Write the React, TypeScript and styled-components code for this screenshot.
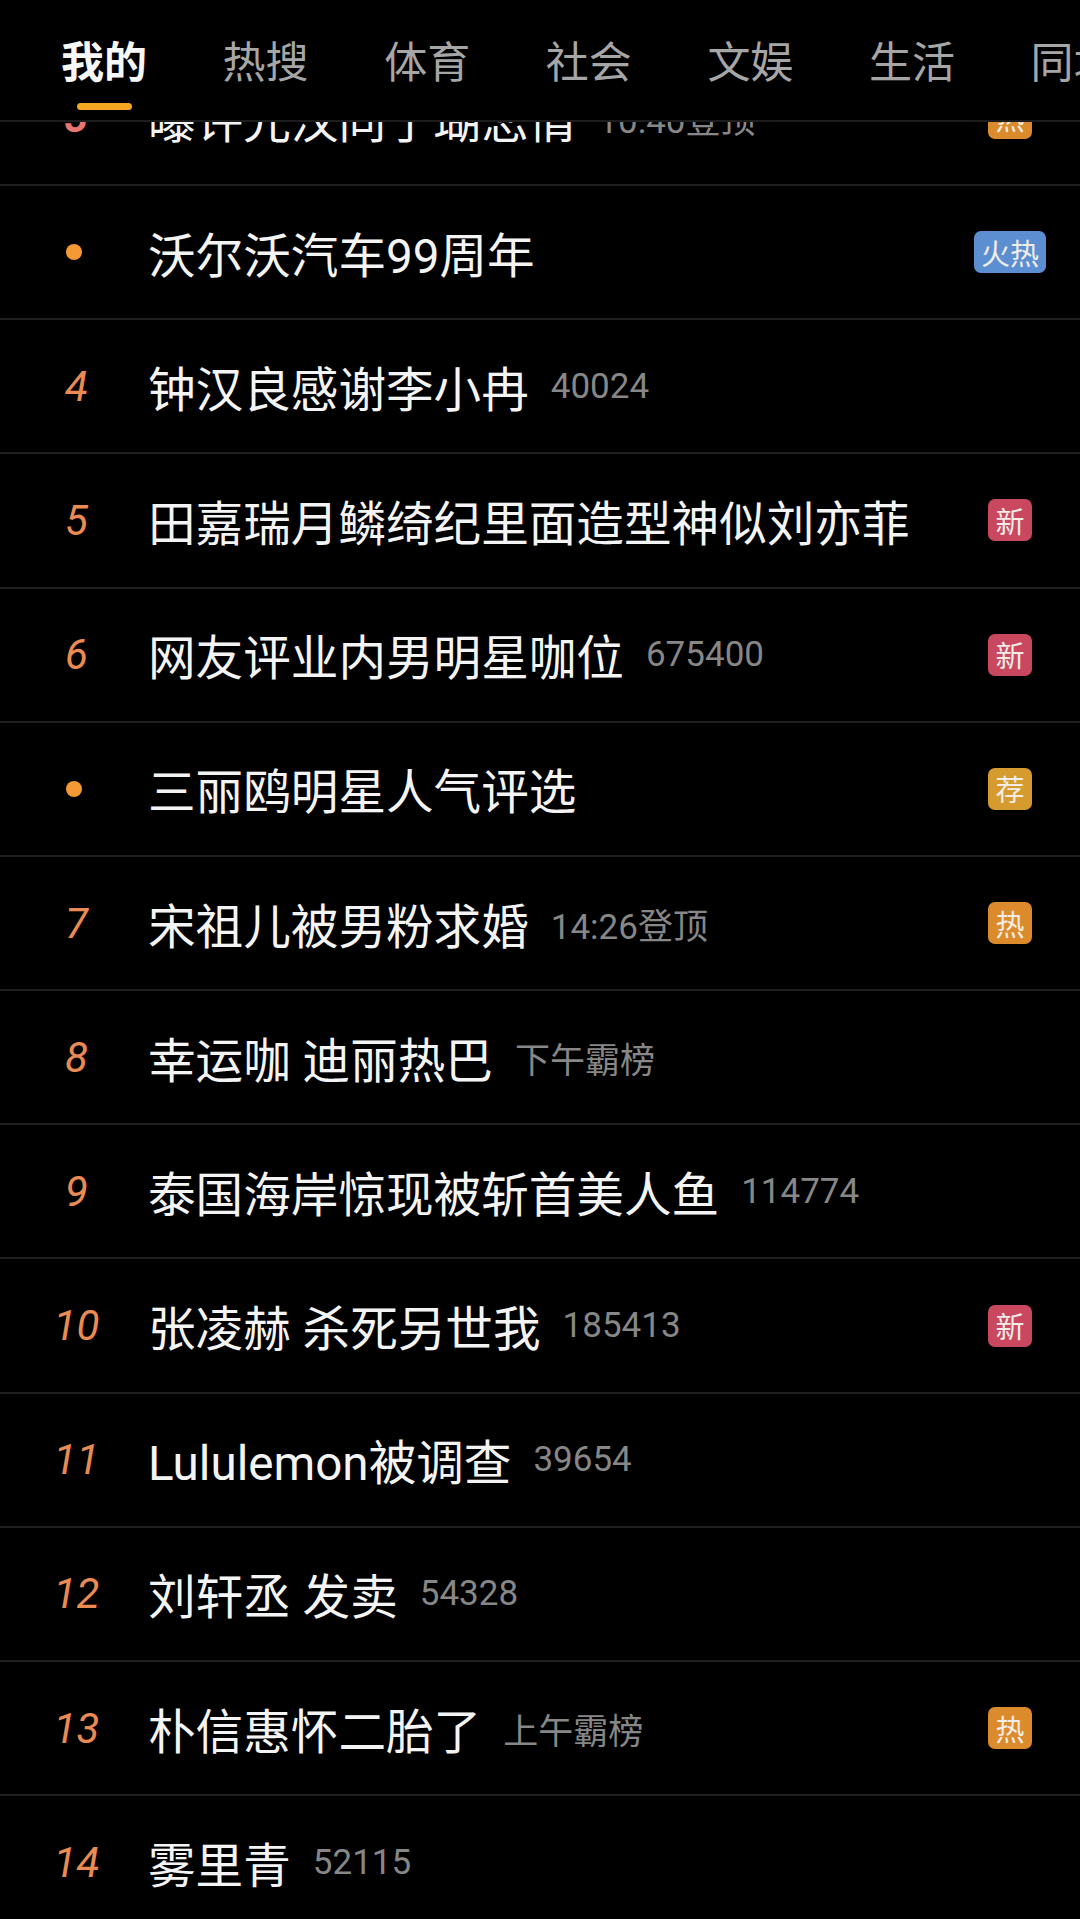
import React from "react";
import styled, { createGlobalStyle } from "styled-components";

const GlobalStyle = createGlobalStyle`
  html, body { margin: 0; padding: 0; background: #000; }
  body { font-family: Roboto, "Noto Sans CJK SC", "Noto Sans", sans-serif; }
  * { box-sizing: border-box; }
`;

const Screen = styled.div`
  position: relative;
  width: 1080px;
  height: 1919px;
  overflow: hidden;
  background: #000;
`;

const Header = styled.nav`
  position: absolute;
  top: 0;
  left: 0;
  right: 0;
  z-index: 2;
  height: 122px;
  padding: 34px 0 0 61px;
  display: flex;
  gap: 75.6px;
  background: #000;
  border-bottom: 2px solid #1d1d1d;
  overflow: hidden;
  white-space: nowrap;
`;

const Tab = styled.div`
  flex-shrink: 0;
  display: flex;
  flex-direction: column;
  align-items: center;
`;

const TabLabel = styled.span<{ $active?: boolean }>`
  font-family: "Noto Sans CJK SC", sans-serif;
  font-size: 43px;
  line-height: 50px;
  font-weight: ${(p) => (p.$active ? 700 : 400)};
  color: ${(p) => (p.$active ? "#f7f7f7" : "#a6a6a6")};
`;

const Indicator = styled.span`
  margin-top: 19px;
  width: 55px;
  height: 7px;
  border-radius: 4px;
  background: #f5a623;
`;

const List = styled.div`
  padding-top: 51.8px;
`;

const Row = styled.div`
  height: 134.2px;
  display: flex;
  align-items: center;
  border-bottom: 2px solid #1f1f1f;
`;

const RankCell = styled.div`
  width: 148px;
  flex-shrink: 0;
  display: flex;
  justify-content: center;
  align-items: center;
`;

const RankNum = styled.span<{ $color: string; $bold?: boolean }>`
  font-family: Roboto, "Liberation Sans", sans-serif;
  font-style: italic;
  font-size: 42px;
  font-weight: ${(p) => (p.$bold ? 700 : 400)};
  color: ${(p) => p.$color};
  padding-left: 5px;
`;

const Dot = styled.span`
  width: 16px;
  height: 16px;
  border-radius: 50%;
  background: #f39a34;
`;

const Main = styled.div`
  flex: 1;
  min-width: 0;
  display: flex;
  align-items: center;
  gap: 22px;
  white-space: nowrap;
`;

const Title = styled.span`
  font-family: Roboto, "Noto Sans CJK SC", sans-serif;
  font-size: 47.6px;
  color: #f4f4f4;
`;

const Sub = styled.span`
  font-family: Roboto, "Noto Sans CJK SC", sans-serif;
  font-size: 35px;
  color: #878787;
`;

const BadgeCell = styled.div`
  width: 100px;
  flex-shrink: 0;
  margin-right: 20px;
  display: flex;
  justify-content: center;
`;

const Badge = styled.span<{ $bg: string }>`
  height: 42px;
  min-width: 42px;
  padding: 0 7px;
  border-radius: 7px;
  display: inline-flex;
  align-items: center;
  justify-content: center;
  background: ${(p) => p.$bg};
  color: #f1ece6;
  font-family: "Noto Sans CJK SC", sans-serif;
  font-size: 29px;
  line-height: 1;
`;

type BadgeKind = "hot" | "fire" | "new" | "rec";

const badgeStyle: Record<BadgeKind, { text: string; bg: string }> = {
  hot: { text: "热", bg: "#dc8b2c" },
  fire: { text: "火热", bg: "#5b8fd2" },
  new: { text: "新", bg: "#c9485f" },
  rec: { text: "荐", bg: "#d69b2e" },
};

type Item = {
  rank?: number;
  title: string;
  sub?: string;
  badge?: BadgeKind;
};

const items: Item[] = [
  { rank: 3, title: "曝许光汉同了瑚恋情", sub: "10:40登顶", badge: "hot" },
  { title: "沃尔沃汽车99周年", badge: "fire" },
  { rank: 4, title: "钟汉良感谢李小冉", sub: "40024" },
  { rank: 5, title: "田嘉瑞月鳞绮纪里面造型神似刘亦菲", badge: "new" },
  { rank: 6, title: "网友评业内男明星咖位", sub: "675400", badge: "new" },
  { title: "三丽鸥明星人气评选", badge: "rec" },
  { rank: 7, title: "宋祖儿被男粉求婚", sub: "14:26登顶", badge: "hot" },
  { rank: 8, title: "幸运咖 迪丽热巴", sub: "下午霸榜" },
  { rank: 9, title: "泰国海岸惊现被斩首美人鱼", sub: "114774" },
  { rank: 10, title: "张凌赫 杀死另世我", sub: "185413", badge: "new" },
  { rank: 11, title: "Lululemon被调查", sub: "39654" },
  { rank: 12, title: "刘轩丞 发卖", sub: "54328" },
  { rank: 13, title: "朴信惠怀二胎了", sub: "上午霸榜", badge: "hot" },
  { rank: 14, title: "雾里青", sub: "52115" },
];

const tabs = ["我的", "热搜", "体育", "社会", "文娱", "生活", "同城"];

function rankColor(rank: number) {
  if (rank === 1) return "#e6434b";
  if (rank === 2) return "#ec6a55";
  if (rank === 3) return "#e8766f";
  return "#e98b52";
}

export default function App() {
  return (
    <>
      <GlobalStyle />
      <Screen>
        <Header>
          {tabs.map((t, i) => (
            <Tab key={t}>
              <TabLabel $active={i === 0}>{t}</TabLabel>
              {i === 0 && <Indicator />}
            </Tab>
          ))}
        </Header>
        <List>
          {items.map((it, i) => {
            const b = it.badge ? badgeStyle[it.badge] : null;
            return (
              <Row key={i}>
                <RankCell>
                  {it.rank ? (
                    <RankNum $color={rankColor(it.rank)} $bold={it.rank <= 3}>
                      {it.rank}
                    </RankNum>
                  ) : (
                    <Dot />
                  )}
                </RankCell>
                <Main>
                  <Title>{it.title}</Title>
                  {it.sub && <Sub>{it.sub}</Sub>}
                </Main>
                <BadgeCell>{b && <Badge $bg={b.bg}>{b.text}</Badge>}</BadgeCell>
              </Row>
            );
          })}
        </List>
      </Screen>
    </>
  );
}
